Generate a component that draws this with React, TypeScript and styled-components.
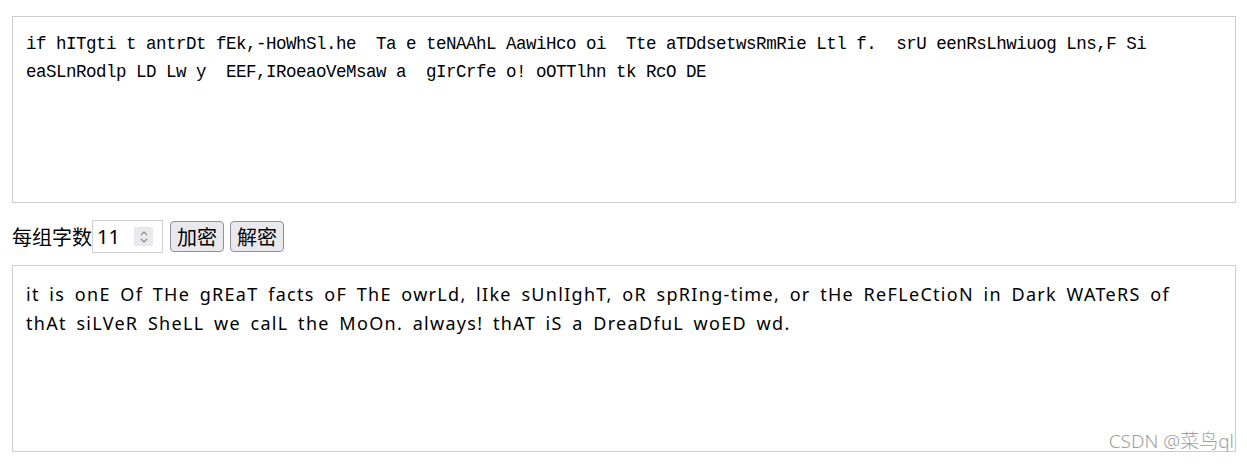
import React from "react";
import styled, { createGlobalStyle } from "styled-components";

const Global = createGlobalStyle`
  html, body { margin: 0; padding: 0; background: #fff; }
  body { width: 1247px; height: 464px; overflow: hidden; }
`;

const Page = styled.div`
  position: relative;
  padding: 16px 11px 0 12px;
  height: 464px;
  box-sizing: border-box;
`;

const Box = styled.textarea<{ $mono?: boolean }>`
  display: block;
  width: 100%;
  height: 187px;
  box-sizing: border-box;
  margin: 0;
  border: 1px solid #cccccc;
  border-radius: 0;
  resize: none;
  outline: none;
  overflow: hidden;
  background: #fff;
  color: #000;
  font-family: ${(p) =>
    p.$mono
      ? `"Liberation Mono", "DejaVu Sans Mono", monospace`
      : `"Noto Sans", "Open Sans", sans-serif`};
  font-size: ${(p) => (p.$mono ? "17.5px" : "18px")};
  letter-spacing: ${(p) => (p.$mono ? "-0.5px" : "1.3px")};
  line-height: ${(p) => (p.$mono ? "28px" : "29px")};
  padding: ${(p) => (p.$mono ? "13px 13px" : "14px 30px 14px 13px")};
  word-spacing: ${(p) => (p.$mono ? "0" : "3.6px")};
  white-space: pre-wrap;
`;

const Controls = styled.div`
  display: flex;
  align-items: center;
  height: 33px;
  margin: 17px 0 12px;
  font-family: "Noto Sans CJK SC", "Noto Sans", sans-serif;
  font-size: 20px;
  color: #000;
`;

const Label = styled.span`
  line-height: 33px;
`;

const NumberField = styled.div`
  display: flex;
  align-items: center;
  width: 71px;
  height: 33px;
  box-sizing: border-box;
  border: 1px solid #d0d0d0;
  background: #fff;
  padding: 0 9px 0 4px;
  margin-right: 7px;
`;

const NumberInput = styled.input`
  flex: 1;
  min-width: 0;
  border: none;
  outline: none;
  padding: 0;
  margin: 0;
  background: transparent;
  font-family: "Noto Sans", sans-serif;
  font-size: 20px;
  color: #000;
`;

const Spinner = styled.span`
  display: flex;
  width: 19px;
  height: 19px;
  background: #e9e9ed;
  align-items: center;
  justify-content: center;
`;

const Btn = styled.button<{ $gap?: number }>`
  height: 31px;
  box-sizing: border-box;
  padding: 0 6px;
  margin: 0 ${(p) => p.$gap ?? 0}px 0 0;
  border: 1px solid #8f8f9d;
  border-radius: 4px;
  background: #e9e9ed;
  color: #000;
  font-family: "Noto Sans CJK SC", sans-serif;
  font-size: 20px;
  line-height: 29px;
  cursor: pointer;
`;

const Watermark = styled.div`
  position: absolute;
  right: 13px;
  top: 428px;
  font-family: "Noto Sans", "Noto Sans CJK SC", sans-serif;
  font-size: 19px;
  line-height: 26px;
  color: #9e9e9e;
  font-weight: 300;
`;

const cipher =
  "if hITgti t antrDt fEk,-HoWhSl.he  Ta e teNAAhL AawiHco oi  Tte aTDdsetwsRmRie Ltl f.  srU eenRsLhwiuog Lns,F Si eaSLnRodlp LD Lw y  EEF,IRoeaoVeMsaw a  gIrCrfe o! oOTTlhn tk RcO DE";

const plain =
  "it is onE Of THe gREaT facts oF ThE owrLd, lIke sUnlIghT, oR spRIng-time, or tHe ReFLeCtioN in Dark WATeRS of thAt siLVeR SheLL we calL the MoOn. always! thAT iS a DreaDfuL woED wd.";

export default function App() {
  return (
    <Page>
      <Global />
      <Box $mono readOnly value={cipher} />
      <Controls>
        <Label>每组字数</Label>
        <NumberField>
          <NumberInput readOnly value="11" />
          <Spinner>
            <svg width="10" height="16" viewBox="0 0 10 16" fill="none">
              <path d="M2 6 L5 3 L8 6" stroke="#8a8a8f" strokeWidth="1.2" />
              <path d="M2 10 L5 13 L8 10" stroke="#8a8a8f" strokeWidth="1.2" />
            </svg>
          </Spinner>
        </NumberField>
        <Btn $gap={6}>加密</Btn>
        <Btn>解密</Btn>
      </Controls>
      <Box readOnly value={plain} />
      <Watermark>CSDN @菜鸟ql</Watermark>
    </Page>
  );
}
